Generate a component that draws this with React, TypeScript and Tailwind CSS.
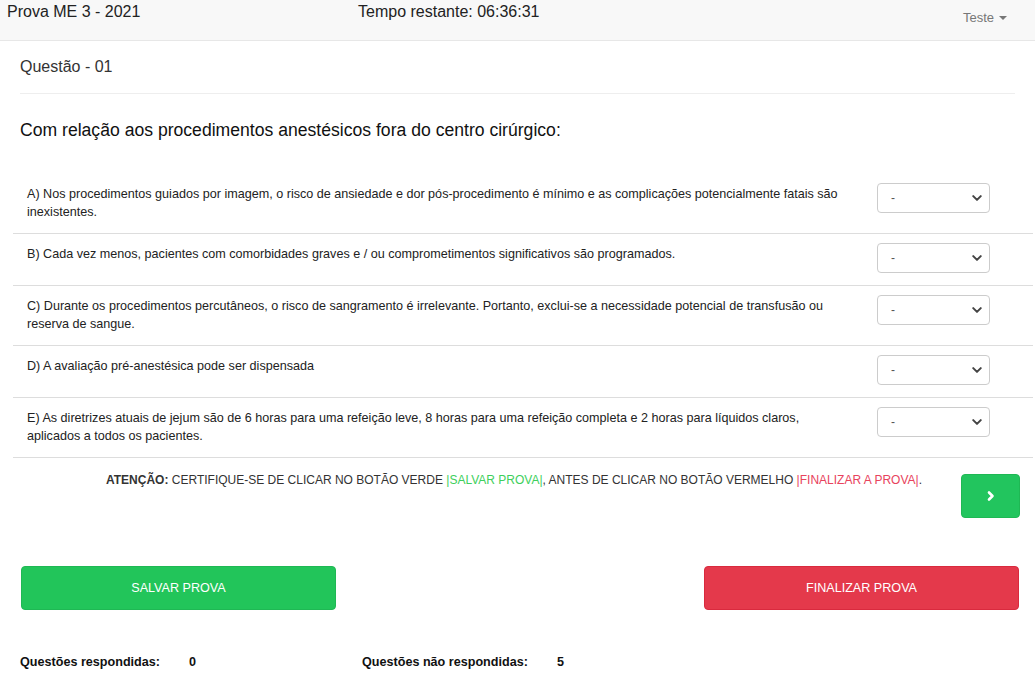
import React from "react";

const itens = [
    "A) Nos procedimentos guiados por imagem, o risco de ansiedade e dor pós-procedimento é mínimo e as complicações potencialmente fatais são inexistentes.",
    "B) Cada vez menos, pacientes com comorbidades graves e / ou comprometimentos significativos são programados.",
    "C) Durante os procedimentos percutâneos, o risco de sangramento é irrelevante. Portanto, exclui-se a necessidade potencial de transfusão ou reserva de sangue.",
    "D) A avaliação pré-anestésica pode ser dispensada",
    "E) As diretrizes atuais de jejum são de 6 horas para uma refeição leve, 8 horas para uma refeição completa e 2 horas para líquidos claros, aplicados a todos os pacientes.",
];

function FakeSelect() {
    return (
        <div className="w-[113px] h-[30px] border border-[#ccc] rounded-[4px] bg-white flex items-center justify-between pl-[13px] pr-[7px]">
            <span className="text-[12px] text-[#555]">-</span>
            <svg width="10" height="8" viewBox="0 0 16 12">
                <path d="M2 3l6 6 6-6" fill="none" stroke="#444" strokeWidth="3.2" strokeLinecap="round" strokeLinejoin="round" />
            </svg>
        </div>
    );
}

export default function App() {
    return (
        <div className="min-h-screen bg-white font-['Liberation_Sans',Arial,sans-serif] text-[#212529]">
            {/* Navbar */}
            <div className="h-[41px] bg-[#f8f8f8] border-b border-[#e7e7e7] grid grid-cols-[351px_1fr_auto] pl-[7px] pr-[28px]">
                <div className="text-[16px] leading-[18px] pt-[3px] text-[#222]">Prova ME 3 - 2021</div>
                <div className="text-[16px] leading-[18px] pt-[3px] text-[#222]">Tempo restante: 06:36:31</div>
                <div className="flex items-center gap-[5px] pt-[10px] self-start text-[13px] leading-[15px] text-[#777]">
                    Teste
                    <svg width="8" height="4" viewBox="0 0 8 4">
                        <path d="M0 0h8L4 4z" fill="#777" />
                    </svg>
                </div>
            </div>

            {/* Question header */}
            <div className="px-[20px]">
                <div className="pt-[14px] pb-[14px] border-b border-[#eee] text-[16px] leading-[24px] text-[#333]">
                    Questão - 01
                </div>
                <div className="mt-[23px] text-[17.6px] leading-[26px] text-[#111]">
                    Com relação aos procedimentos anestésicos fora do centro cirúrgico:
                </div>
            </div>

            {/* Items */}
            <div className="mt-[31px] ml-[13px] mr-[2px]">
                {itens.map((t, i) => (
                    <div key={i} className="flex items-start border-b border-[#ddd]">
                        <div className="w-[837px] pl-[14px] pt-[11px] pb-[12px] text-[12.6px] leading-[18px] text-[#222]">
                            {t}
                        </div>
                        <div className="pl-[27px] pt-[9px] pb-[12px]">
                            <FakeSelect />
                        </div>
                    </div>
                ))}
            </div>

            {/* Attention */}
            <div className="flex items-start pl-[106px] pr-[15px] pt-[15px]">
                <div className="text-[12px] leading-[14px] text-[#333]">
                    <b className="font-bold">ATENÇÃO:</b> CERTIFIQUE-SE DE CLICAR NO BOTÃO VERDE{" "}
                    <span className="text-[#3ecf5c]">|SALVAR PROVA|</span>, ANTES DE CLICAR NO BOTÃO VERMELHO{" "}
                    <span className="text-[#e8435d]">|FINALIZAR A PROVA|</span>.
                </div>
                <button className="ml-auto mt-[1px] w-[59px] h-[44px] rounded-[4px] bg-[#22c55e] border border-[#1fb854] flex items-center justify-center">
                    <svg width="10" height="12" viewBox="0 0 10 12">
                        <path d="M3 2.5l3.5 3.5L3 9.5" fill="none" stroke="white" strokeWidth="2.6" strokeLinecap="round" strokeLinejoin="round" />
                    </svg>
                </button>
            </div>

            {/* Buttons */}
            <div className="flex justify-between pl-[21px] pr-[16px] mt-[48px]">
                <button className="w-[315px] h-[44px] rounded-[4px] bg-[#22c55a] border border-[#1fb854] text-white text-[12.6px]">
                    SALVAR PROVA
                </button>
                <button className="w-[315px] h-[44px] rounded-[4px] bg-[#e4394b] border border-[#d92a3e] text-white text-[12.6px]">
                    FINALIZAR PROVA
                </button>
            </div>

            {/* Stats */}
            <div className="grid grid-cols-[169px_173px_195px_auto] pl-[20px] mt-[44px] text-[12.6px] leading-[16px] font-bold text-[#111]">
                <span>Questões respondidas:</span>
                <span>0</span>
                <span>Questões não respondidas:</span>
                <span>5</span>
            </div>
        </div>
    );
}
